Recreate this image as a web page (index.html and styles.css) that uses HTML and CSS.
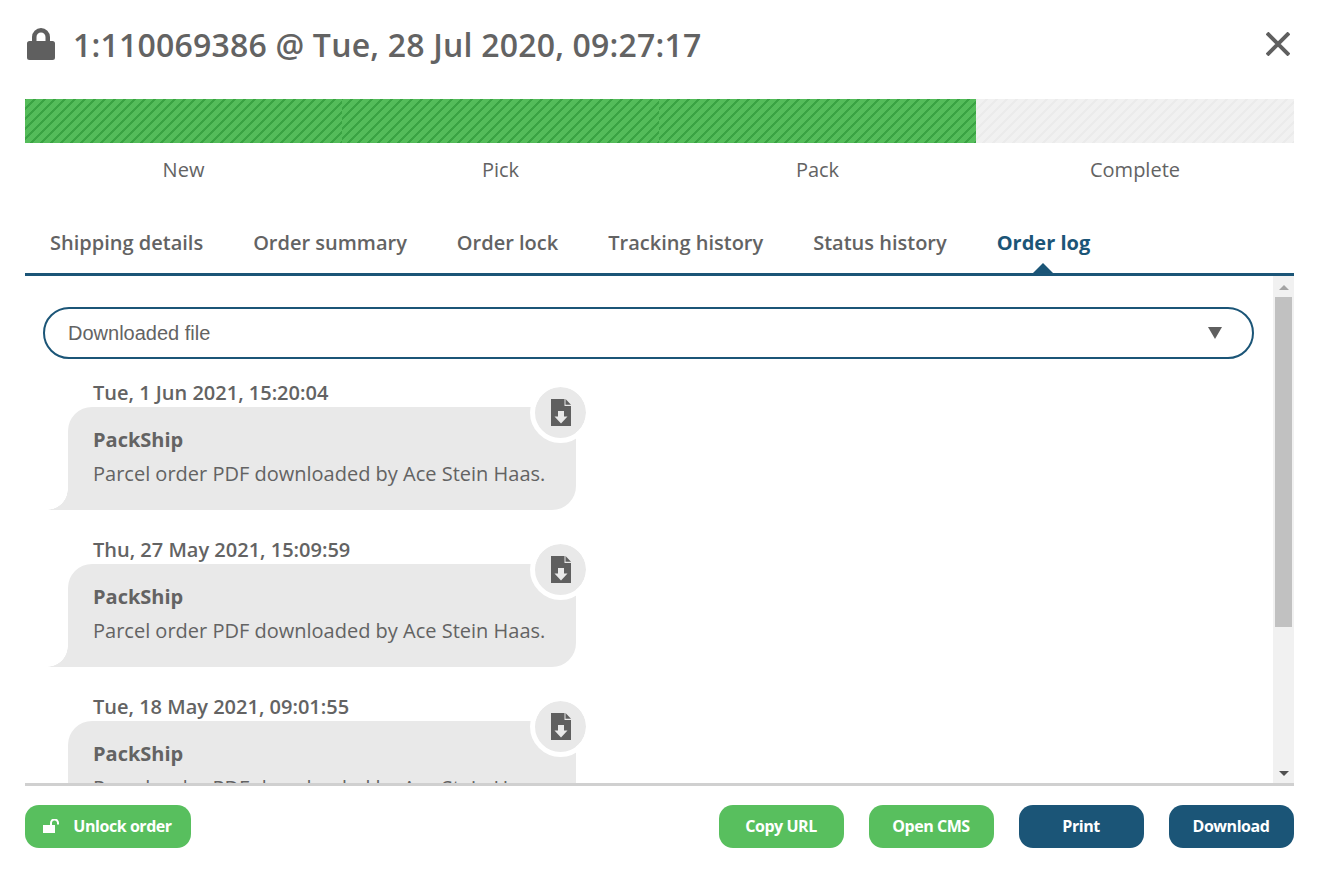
FILE: index.html
```html
<!DOCTYPE html>
<html lang="en">
<head>
    <meta charset="UTF-8">
    <meta name="viewport" content="width=device-width, initial-scale=1.0">
    <title>Order 1:110069386</title>
    <link rel="stylesheet" href="styles.css">
</head>
<body>

<div class="modal">
    <header class="modal-head">
        <svg class="lock-icon" viewBox="0 0 28 32" width="28" height="32">
            <path fill="#5f5f5f" d="M5 13V9a9 9 0 0 1 18 0v4h2.500A2.500 2.500 0 0 1 28 15.500V29.500A2.500 2.500 0 0 1 25.500 32H2.500A2.500 2.500 0 0 1 0 29.500V15.500A2.500 2.500 0 0 1 2.500 13zM9.500 13h9V9a4.500 4.500 0 0 0-9 0z"/>
        </svg>
        <h1 class="modal-title">1:110069386 @ Tue, 28 Jul 2020, 09:27:17</h1>
        <svg class="close-icon" viewBox="0 0 24 24" width="24" height="24">
            <path stroke="#5f5f5f" stroke-width="4" d="M1 1l22 22M23 1L1 23"/>
        </svg>
    </header>

    <div class="progress">
        <div class="step">
            <div class="step-bar done"></div>
            <div class="step-label">New</div>
        </div>
        <div class="step">
            <div class="step-bar done"></div>
            <div class="step-label">Pick</div>
        </div>
        <div class="step">
            <div class="step-bar done"></div>
            <div class="step-label">Pack</div>
        </div>
        <div class="step last">
            <div class="step-bar"></div>
            <div class="step-label">Complete</div>
        </div>
    </div>

    <nav class="tabs">
        <a class="tab">Shipping details</a>
        <a class="tab">Order summary</a>
        <a class="tab">Order lock</a>
        <a class="tab">Tracking history</a>
        <a class="tab">Status history</a>
        <a class="tab active">Order log</a>
    </nav>

    <div class="panel">
        <div class="log">
            <div class="filter">
                <span>Downloaded file</span>
                <span class="filter-arrow"></span>
            </div>

            <div class="entry">
                <div class="entry-date">Tue, 1 Jun 2021, 15:20:04</div>
                <div class="bubble">
                    <div class="bubble-title">PackShip</div>
                    <div class="bubble-text">Parcel order PDF downloaded by Ace Stein Haas.</div>
                    <div class="badge">
                        <svg viewBox="0 0 20 27" width="20" height="27"><path fill="#5f5f5f" d="M0 0h13.500v7H20v20H0z"/><path fill="#5f5f5f" d="M14.500 0L20 5.800h-5.500z"/><path fill="#e9e9e9" d="M7 12h6v5.500h3.500L10 24.500 3.500 17.500H7z"/></svg>
                    </div>
                </div>
            </div>

            <div class="entry">
                <div class="entry-date">Thu, 27 May 2021, 15:09:59</div>
                <div class="bubble">
                    <div class="bubble-title">PackShip</div>
                    <div class="bubble-text">Parcel order PDF downloaded by Ace Stein Haas.</div>
                    <div class="badge">
                        <svg viewBox="0 0 20 27" width="20" height="27"><path fill="#5f5f5f" d="M0 0h13.500v7H20v20H0z"/><path fill="#5f5f5f" d="M14.500 0L20 5.800h-5.500z"/><path fill="#e9e9e9" d="M7 12h6v5.500h3.500L10 24.500 3.500 17.500H7z"/></svg>
                    </div>
                </div>
            </div>

            <div class="entry">
                <div class="entry-date">Tue, 18 May 2021, 09:01:55</div>
                <div class="bubble">
                    <div class="bubble-title">PackShip</div>
                    <div class="bubble-text">Parcel order PDF downloaded by Ace Stein Haas.</div>
                    <div class="badge">
                        <svg viewBox="0 0 20 27" width="20" height="27"><path fill="#5f5f5f" d="M0 0h13.500v7H20v20H0z"/><path fill="#5f5f5f" d="M14.500 0L20 5.800h-5.500z"/><path fill="#e9e9e9" d="M7 12h6v5.500h3.500L10 24.500 3.500 17.500H7z"/></svg>
                    </div>
                </div>
            </div>
        </div>

        <div class="scrollbar">
            <span class="scroll-up"></span>
            <div class="scroll-track"><div class="scroll-thumb"></div></div>
            <span class="scroll-down"></span>
        </div>
    </div>

    <footer class="actions">
        <button class="btn green unlock">
            <svg viewBox="0 0 16 14" width="16" height="14"><path fill="#fff" d="M0 6h12v8H0z"/><path fill="none" stroke="#fff" stroke-width="2" d="M8 6V4a3.500 3.500 0 0 1 7 0v1.500"/></svg>
            Unlock order
        </button>
        <div class="actions-right">
            <button class="btn green">Copy URL</button>
            <button class="btn green">Open CMS</button>
            <button class="btn blue">Print</button>
            <button class="btn blue">Download</button>
        </div>
    </footer>
</div>

</body>
</html>
```
FILE: styles.css
```css
* {
    box-sizing: border-box;
}

html, body {
    height: 100%;
}

body {
    margin: 0;
    background-color: #fff;
    color: #636363;
    font-family: "Open Sans", Arial, sans-serif;
    overflow: hidden;
}

.modal {
    height: 870px;
    padding: 0 25px;
}

.modal-head {
    display: flex;
    align-items: center;
    height: 99px;
    padding: 0 4px 11px 2px;
}

.modal-title {
    flex: 1;
    margin: 2px 0 0 18px;
    font-size: 32px;
    font-weight: 600;
    letter-spacing: 0.200px;
    line-height: 44px;
}

.progress {
    display: flex;
}

.step {
    width: 317px;
    text-align: center;
}

.step.last {
    flex: 1;
}

.step-bar {
    height: 44px;
    background-color: #f1f1f1;
    background-image: repeating-linear-gradient(-45deg, #ebebeb 0, #ebebeb 1.500px, transparent 1.500px, transparent 7.070px);
}

.step-bar.done {
    background-color: #54bc5a;
    background-image: repeating-linear-gradient(-45deg, #3aa343 0, #3aa343 1.500px, transparent 1.500px, transparent 7.070px);
}

.step-label {
    margin-top: 13px;
    font-size: 20px;
    line-height: 28px;
}

.tabs {
    display: flex;
    height: 92px;
    padding-top: 30px;
    border-bottom: 3px solid #1b5577;
}

.tab {
    position: relative;
    padding: 15px 25px 0;
    font-size: 20px;
    font-weight: 600;
    line-height: 28px;
}

.tab.active {
    color: #1b5577;
    font-weight: 700;
}

.tab.active::after {
    content: "";
    position: absolute;
    left: 50%;
    bottom: 0;
    margin-left: -10px;
    border-left: 10px solid transparent;
    border-right: 10px solid transparent;
    border-bottom: 10px solid #1b5577;
}

.panel {
    display: flex;
    height: 510px;
    border-bottom: 3px solid #d0d0d0;
}

.log {
    flex: 1;
    overflow: hidden;
    padding: 31px 19px 0 18px;
}

.filter {
    display: flex;
    align-items: center;
    justify-content: space-between;
    height: 52px;
    margin-bottom: 20px;
    padding: 0 30px 0 23px;
    border: 2px solid #1b5577;
    border-radius: 26px;
    font-family: "Liberation Sans", Arial, sans-serif;
    font-size: 20px;
}

.filter-arrow {
    border-left: 7px solid transparent;
    border-right: 7px solid transparent;
    border-top: 12px solid #5f5f5f;
}

.entry {
    margin-left: 25px;
    margin-bottom: 26px;
}

.entry-date {
    height: 28px;
    padding-left: 25px;
    font-size: 20px;
    font-weight: 600;
    line-height: 28px;
}

.bubble {
    position: relative;
    width: 508px;
    height: 103px;
    padding: 16px 25px 0;
    background-color: #e9e9e9;
    border-radius: 24px 24px 24px 0;
    font-size: 20px;
    line-height: 34px;
}

.bubble::before {
    content: "";
    position: absolute;
    left: -21px;
    bottom: 0;
    width: 21px;
    height: 21px;
    background: radial-gradient(circle at 0 0, transparent 20.500px, #e9e9e9 21px);
}

.bubble-title {
    font-weight: 700;
}

.badge {
    position: absolute;
    top: -25px;
    right: -15px;
    display: flex;
    align-items: center;
    justify-content: center;
    width: 61px;
    height: 61px;
    background-color: #e9e9e9;
    background-clip: padding-box;
    border: 5px solid #fff;
    border-radius: 50%;
}

.scrollbar {
    display: flex;
    flex-direction: column;
    width: 21px;
    background-color: #f1f1f1;
}

.scroll-up, .scroll-down {
    display: block;
    width: 0;
    height: 0;
    border-left: 5px solid transparent;
    border-right: 5px solid transparent;
    margin-left: auto;
    margin-right: auto;
}

.scroll-up {
    margin-top: 9px;
    margin-bottom: 7px;
    border-bottom: 5px solid #a3a3a3;
}

.scroll-down {
    margin-bottom: 7px;
    border-top: 5px solid #505050;
}

.scroll-track {
    flex: 1;
    padding: 0 2px;
}

.scroll-thumb {
    height: 330px;
    background-color: #c1c1c1;
}

.actions {
    display: flex;
    justify-content: space-between;
    padding-top: 19px;
}

.actions-right {
    display: flex;
    gap: 25px;
}

.btn {
    display: flex;
    align-items: center;
    justify-content: center;
    width: 125px;
    height: 43px;
    padding: 0 1px 2px 0;
    border: none;
    border-radius: 14px;
    color: #fff;
    font-family: "Open Sans", Arial, sans-serif;
    font-size: 16px;
    font-weight: 700;
    letter-spacing: -0.450px;
}

.btn.unlock {
    width: 166px;
    gap: 14px;
    padding-right: 1px;
}

.btn.green {
    background-color: #58bf5e;
}

.btn.blue {
    background-color: #1b5577;
}
```
